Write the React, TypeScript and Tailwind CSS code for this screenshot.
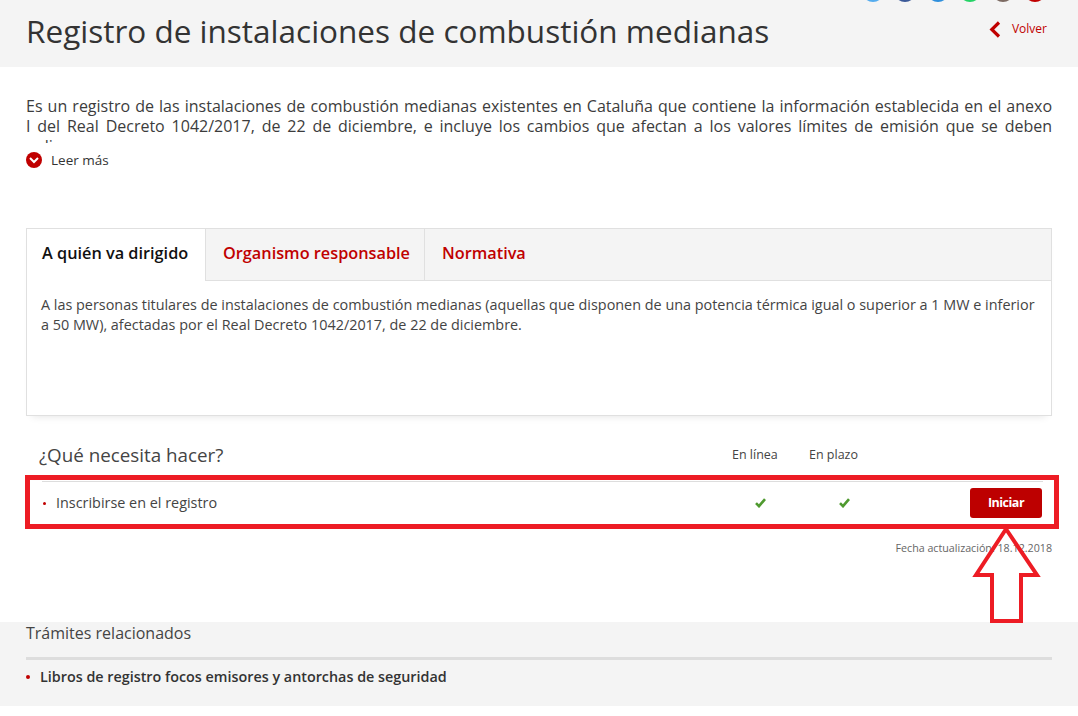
import React from "react";

const font = { fontFamily: '"Open Sans", sans-serif' };

const socials = [
  "bg-[#55acee]",
  "bg-[#3b5998]",
  "bg-[#2f8fdc]",
  "bg-[#25d366]",
  "bg-[#7d6b63]",
  "bg-[#c00000]",
];

const Check = () => (
  <svg width="11" height="10" viewBox="0 0 11 10">
    <path d="M1 5.2 L4 8.2 L10 1.2" fill="none" stroke="#4f9a2f" strokeWidth="2.6" />
  </svg>
);

const App: React.FC = () => {
  return (
    <div className="relative h-[716px] w-[1078px] overflow-hidden bg-white text-[#333]" style={font}>
      <header className="relative flex h-[67px] items-start justify-between bg-[#f4f4f4] pl-[26px] pr-[31px]">
        <div className="absolute -top-[20px] right-[32px] flex gap-[10.5px]">
          {socials.map((c, i) => (
            <span key={i} className={`h-[22px] w-[22px] rounded-full ${c}`} />
          ))}
        </div>
        <h1 className="mt-[10px] text-[31.5px] leading-[42px] font-normal text-[#333]">
          Registro de instalaciones de combustión medianas
        </h1>
        <a className="mt-[20px] flex items-center gap-[11px] text-[12px] leading-[18px] text-[#c00000]">
          <svg width="12" height="17" viewBox="0 0 12 17">
            <path d="M10 1.5 L2.8 8.5 L10 15.5" fill="none" stroke="#c00000" strokeWidth="3.2" />
          </svg>
          Volver
        </a>
      </header>

      <section className="px-[26px] pt-[29px]">
        <div className="h-[47px] overflow-hidden text-justify text-[16px] leading-[20px] text-[#3c3c3c] [text-align-last:justify]">
          Es un registro de las instalaciones de combustión medianas existentes en Cataluña que contiene la
          información establecida en el anexo
          <br />
          I del Real Decreto 1042/2017, de 22 de diciembre, e incluye los cambios que afectan a los valores
          límites de emisión que se deben
          <br />
          <span className="block [text-align-last:left]">aplicar.</span>
        </div>
        <div className="mt-[7px] flex items-center gap-[9px] text-[13.5px] leading-[20px] text-[#333]">
          <span className="flex h-[16px] w-[16px] items-center justify-center rounded-full bg-[#c00000]">
            <svg width="10" height="7" viewBox="0 0 10 7">
              <path d="M1 1 L5 5 L9 1" fill="none" stroke="#fff" strokeWidth="2" />
            </svg>
          </span>
          Leer más
        </div>
      </section>

      <section className="mx-[26px] mt-[58px] h-[188px] border border-[#e0e0e0] shadow-[0_6px_8px_-6px_rgba(0,0,0,0.12)]">
        <div className="flex h-[52px]">
          <div className="flex w-[178px] items-center bg-white pb-[3px] pl-[15px] text-[16.3px] font-[560] text-[#111]">
            A quién va dirigido
          </div>
          <div className="flex w-[219px] items-center border-b border-l border-[#e0e0e0] bg-[#f4f4f4] pb-[2px] pl-[17px] text-[16.3px] font-[560] text-[#c00000]">
            Organismo responsable
          </div>
          <div className="flex flex-1 items-center border-b border-l border-[#e0e0e0] bg-[#f4f4f4] pb-[2px] pl-[17px] text-[16.3px] font-[560] text-[#c00000]">
            Normativa
          </div>
        </div>
        <p className="px-[14px] pt-[14px] text-[14.4px] leading-[19.6px] text-[#444]">
          A las personas titulares de instalaciones de combustión medianas (aquellas que disponen de una potencia
          térmica igual o superior a 1 MW e inferior a 50 MW), afectadas por el Real Decreto 1042/2017, de 22 de
          diciembre.
        </p>
      </section>

      <section className="mx-[26px] mt-[24px]">
        <div className="flex h-[30px] items-center pl-[13px]">
          <h2 className="w-[693px] text-[18.8px] font-normal leading-[26px] text-[#444]">¿Qué necesita hacer?</h2>
          <span className="w-[77px] text-[12.5px] text-[#444]">En línea</span>
          <span className="text-[12.5px] text-[#444]">En plazo</span>
        </div>
        <div className="mt-[11px] ml-[16px] mr-[9px] flex h-[43px] items-center border-t border-[#ddd]">
          <span className="mx-[1px] h-[3px] w-[3px] rounded-full bg-[#c00000]" />
          <span className="ml-[9px] w-[699px] text-[14.4px] text-[#444]">Inscribirse en el registro</span>
          <span className="flex w-[84px] justify-start"><Check /></span>
          <span className="flex w-[131px]"><Check /></span>
          <button className="h-[30px] w-[72px] rounded-[3px] bg-[#bd0000] text-[12.5px] font-bold tracking-[-0.5px] text-white">
            Iniciar
          </button>
        </div>
        <p className="mt-[16px] text-right text-[10.7px] leading-[16px] text-[#666]">
          Fecha actualización: 18.12.2018
        </p>
      </section>

      <footer className="mt-[66px] h-[84px] bg-[#f4f4f4] px-[26px]">
        <h3 className="text-[16px] leading-[22px] font-normal text-[#444]">Trámites relacionados</h3>
        <div className="mt-[13px] h-[3px] bg-[#ddd]" />
        <div className="mt-[7px] flex items-center gap-[10px] text-[14.35px] font-semibold leading-[20px] text-[#333]">
          <span className="h-[4px] w-[4px] rounded-full bg-[#c00000]" />
          Libros de registro focos emisores y antorchas de seguridad
        </div>
      </footer>

      {/* annotation drawn over the screenshot */}
      <div className="pointer-events-none absolute left-[25px] top-[475px] h-[54px] w-[1034px] border-[5px] border-[#ed1c24]" />
      <svg className="pointer-events-none absolute left-[970px] top-[525px]" width="72" height="100" viewBox="0 0 72 100">
        <path d="M36 4 L6 50 L22 50 L22 96 L51 96 L51 50 L67 50 Z" fill="none" stroke="#ed1c24" strokeWidth="4" />
      </svg>
    </div>
  );
};

export default App;
